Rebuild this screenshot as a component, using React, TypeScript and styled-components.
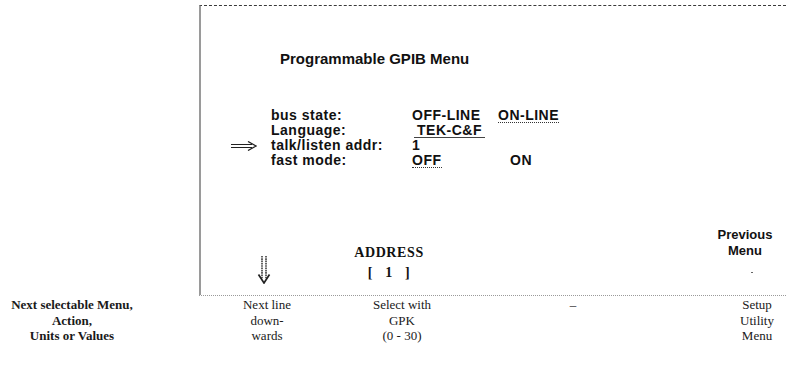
import * as React from "react";
import styled, { createGlobalStyle } from "styled-components";

const GlobalStyle = createGlobalStyle`
  html, body {
    margin: 0;
    padding: 0;
    background: #fff;
  }
  body {
    font-family: "Liberation Sans", Arial, sans-serif;
    color: #111;
  }
`;

const Page = styled.div`
  width: 786px;
  height: 379px;
  overflow: hidden;
  padding-top: 5px;
  box-sizing: border-box;
`;

const Screen = styled.div`
  margin-left: 199px;
  height: 291px;
  box-sizing: border-box;
  border-left: 2px solid #9a9a9a;
  border-top: 1px dashed #3a3a3a;
  border-bottom: 1px dotted #9a9a9a;
  display: flex;
  flex-direction: column;
  font-weight: bold;
`;

const Title = styled.div`
  margin-top: 44px;
  padding-left: 79px;
  font-size: 15px;
  line-height: 17px;
`;

const MenuGrid = styled.div`
  margin-top: 41px;
  display: grid;
  grid-template-columns: 70px 141px 86px auto;
  grid-auto-rows: 15px;
  font-size: 14px;
  letter-spacing: 0.5px;
  line-height: 15px;
`;

const Pointer = styled.div`
  display: flex;
  align-items: center;
  padding-left: 30px;
`;

const Label = styled.div`
  white-space: nowrap;
`;

const Value = styled.div<{ $indent?: number; $under?: boolean }>`
  white-space: nowrap;
  padding-left: ${(p) => p.$indent || 0}px;

  span {
    display: inline-block;
    vertical-align: top;
    border-bottom: ${(p) => (p.$under ? "1px dotted #333" : "none")};
    line-height: 14px;
  }
`;

const LineValue = styled.div`
  white-space: nowrap;
  padding-left: 5px;

  span {
    display: inline-block;
    vertical-align: top;
    min-width: 68px;
    border-bottom: 1px solid #444;
    margin-left: -3px;
    padding-left: 3px;
    line-height: 14px;
  }
`;

const SoftkeyRow = styled.div`
  margin-top: auto;
  display: flex;
  align-items: flex-end;
  padding-bottom: 12px;
`;

const KeyCell = styled.div<{ $width: number; $left: number }>`
  flex: 0 0 ${(p) => p.$width}px;
  margin-left: ${(p) => p.$left}px;
  text-align: center;
  position: relative;
`;

const ArrowCell = styled(KeyCell)`
  margin-bottom: -5px;
`;

const AddressText = styled.div`
  font-family: "Liberation Serif", "Times New Roman", serif;
  font-size: 14px;
  letter-spacing: 0.6px;
  line-height: 20px;
  white-space: pre;
`;

const KeyText = styled.div`
  font-size: 13px;
  line-height: 16px;
  padding-bottom: 24px;
`;

const Speck = styled.span`
  position: absolute;
  left: 41px;
  bottom: 10px;
  width: 2px;
  height: 1px;
  background: #666;
`;

const Legend = styled.div`
  display: flex;
  margin-top: 1px;
  font-family: "Liberation Serif", "Times New Roman", serif;
  font-size: 13px;
  line-height: 15.5px;
  color: #1a1a1a;
`;

const LegendCell = styled.div<{ $width: number; $left: number; $bold?: boolean }>`
  flex: 0 0 ${(p) => p.$width}px;
  margin-left: ${(p) => p.$left}px;
  text-align: center;
  font-weight: ${(p) => (p.$bold ? "bold" : "normal")};
  white-space: nowrap;
`;

function RightArrow() {
  return (
    <svg width="26" height="10" viewBox="0 0 26 10">
      <line x1="0" y1="3.5" x2="21" y2="3.5" stroke="#222" strokeWidth="1" />
      <line x1="0" y1="6.5" x2="21" y2="6.5" stroke="#222" strokeWidth="1" />
      <path d="M17 0.5 L25 5 L17 9.5" fill="none" stroke="#222" strokeWidth="1.3" />
    </svg>
  );
}

function DownArrow() {
  return (
    <svg width="14" height="28" viewBox="0 0 14 28">
      <line x1="5" y1="0" x2="5" y2="23" stroke="#222" strokeWidth="1.4" strokeDasharray="1.6 0.7" />
      <line x1="9" y1="0" x2="9" y2="23" stroke="#222" strokeWidth="1.4" strokeDasharray="1.6 0.7" />
      <path d="M1.5 18.5 L7 27 L12.5 18.5" fill="none" stroke="#222" strokeWidth="1.7" />
    </svg>
  );
}

export default function App() {
  return (
    <Page>
      <GlobalStyle />
      <Screen>
        <Title>Programmable GPIB Menu</Title>
        <MenuGrid>
          <div />
          <Label>bus state:</Label>
          <Value>OFF-LINE</Value>
          <Value $under>
            <span>ON-LINE</span>
          </Value>

          <div />
          <Label>Language:</Label>
          <LineValue>
            <span>TEK-C&amp;F</span>
          </LineValue>
          <div />

          <Pointer>
            <RightArrow />
          </Pointer>
          <Label>talk/listen addr:</Label>
          <Value>1</Value>
          <div />

          <div />
          <Label>fast mode:</Label>
          <Value $under>
            <span>OFF</span>
          </Value>
          <Value $indent={12}>ON</Value>
        </MenuGrid>
        <SoftkeyRow>
          <ArrowCell $width={30} $left={48}>
            <DownArrow />
          </ArrowCell>
          <KeyCell $width={90} $left={65}>
            <AddressText>ADDRESS</AddressText>
            <AddressText>{"[   1   ]"}</AddressText>
          </KeyCell>
          <KeyCell $width={70} $left={276}>
            <KeyText>
              Previous
              <br />
              Menu
            </KeyText>
            <Speck />
          </KeyCell>
        </SoftkeyRow>
      </Screen>
      <Legend>
        <LegendCell $width={144} $left={0} $bold>
          Next selectable Menu,
          <br />
          Action,
          <br />
          Units or Values
        </LegendCell>
        <LegendCell $width={100} $left={73}>
          Next line
          <br />
          down-
          <br />
          wards
        </LegendCell>
        <LegendCell $width={100} $left={35}>
          Select with
          <br />
          GPK
          <br />
          (0 - 30)
        </LegendCell>
        <LegendCell $width={60} $left={91}>
          –
        </LegendCell>
        <LegendCell $width={58} $left={125}>
          Setup
          <br />
          Utility
          <br />
          Menu
        </LegendCell>
      </Legend>
    </Page>
  );
}
